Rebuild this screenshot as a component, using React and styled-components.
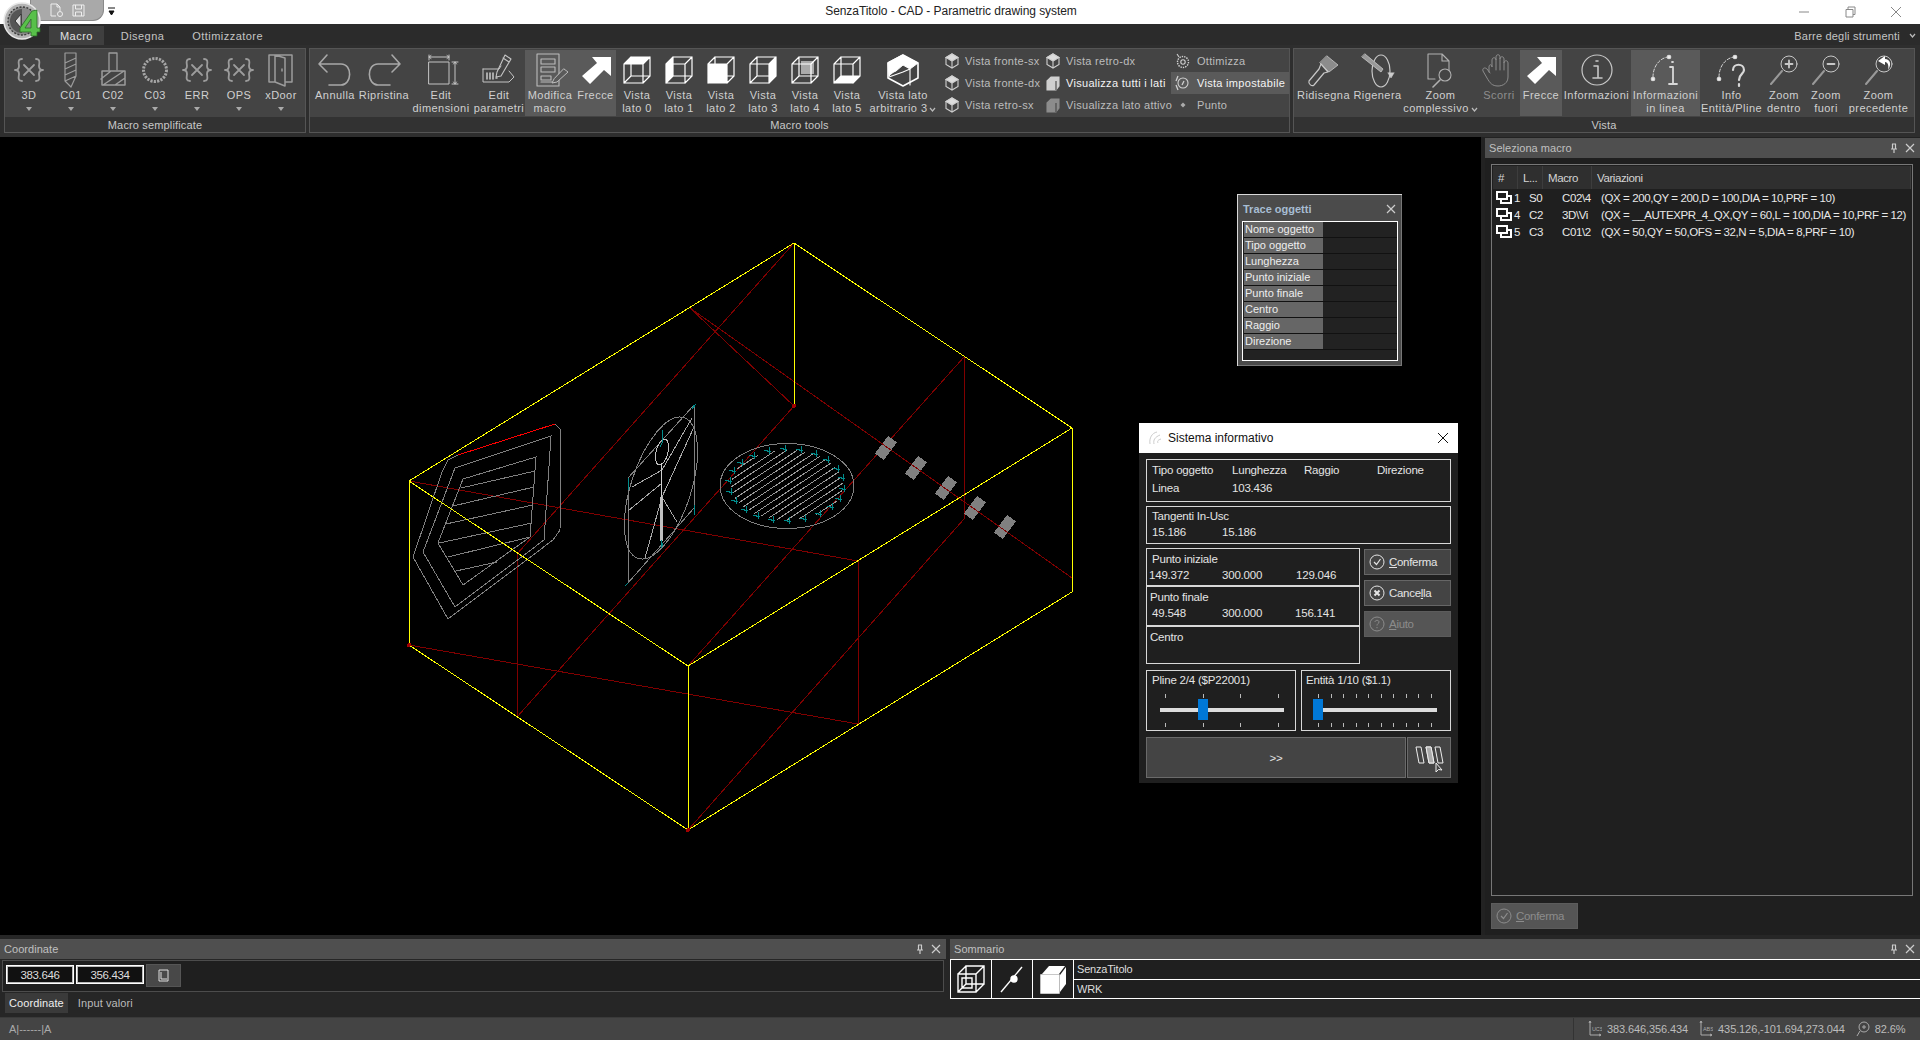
import React from 'react';
import styled, { createGlobalStyle } from 'styled-components';

const GlobalStyle = createGlobalStyle`
  html, body { margin: 0; padding: 0; background: #222; }
  body { font-family: "Liberation Sans", Arial, sans-serif; font-size: 11px; }
  * { box-sizing: border-box; }
`;

const Page = styled.div`
  width: 1920px;
  height: 1040px;
  display: flex;
  flex-direction: column;
  overflow: hidden;
  position: relative;
  background: #222;
`;

/* ---------- title bar ---------- */
const TitleBar = styled.div`
  height: 24px;
  background: #fff;
  display: flex;
  align-items: center;
  justify-content: center;
  position: relative;
  color: #222;
  font-size: 12px;
  letter-spacing: -0.06px;
  padding-right: 18px;
  padding-bottom: 2px;
`;
const LogoBox = styled.svg`
  position: absolute;
  left: 3px;
  top: 1px;
  width: 40px;
  height: 40px;
  z-index: 3;
`;
const QuickBar = styled.div`
  position: absolute;
  left: 30px;
  top: 0;
  width: 74px;
  height: 21px;
  background: #a9a9a9;
  border: 1px solid #8a8a8a;
  border-top: 0;
  border-radius: 0 0 11px 0;
  display: flex;
  align-items: center;
  gap: 7px;
  padding-left: 17px;
`;
const QuickMenu = styled.svg`
  position: absolute;
  left: 108px;
  top: 7px;
  width: 8px;
  height: 9px;
`;
const WinControls = styled.div`
  position: absolute;
  right: 1px;
  top: 0;
  display: flex;
`;
const WinBtn = styled.div`
  width: 46px;
  height: 24px;
  display: flex;
  align-items: center;
  justify-content: center;
  svg { width: 12px; height: 12px; stroke: #888; fill: none; stroke-width: 1; }
`;

/* ---------- ribbon ---------- */
const TabRow = styled.div`
  height: 21px;
  background: #2b2b2b;
  display: flex;
  align-items: flex-end;
  padding-left: 49px;
  position: relative;
  letter-spacing: 0.45px;
`;
const Tab = styled.div`
  height: 19px;
  padding: 0 11px;
  margin-right: ${(p) => p.$gap || 0}px;
  display: flex;
  align-items: center;
  color: ${(p) => (p.$active ? '#e0e0e0' : '#c4c4c4')};
  background: ${(p) => (p.$active ? '#3f3f3f' : 'transparent')};
`;
const ToolbarsMenu = styled.div`
  margin-left: auto;
  display: flex;
  align-items: center;
  gap: 7px;
  height: 19px;
  padding-right: 4px;
  color: #c4c4c4;
  letter-spacing: 0.2px;
`;
const Ribbon = styled.div`
  height: 92px;
  background: #2e2e2e;
  display: flex;
  gap: 3px;
  padding: 3px 5px 4px 4px;
`;
const Group = styled.div`
  width: ${(p) => p.$w}px;
  border: 1px solid #555;
  display: flex;
  flex-direction: column;
`;
const GroupBody = styled.div`
  height: 68px;
  background: #444;
  display: flex;
  padding: 1px 0 0 ${(p) => p.$pad || 0}px;
`;
const GroupLabel = styled.div`
  flex: 1;
  background: #323232;
  color: #c8c8c8;
  display: flex;
  align-items: center;
  justify-content: center;
  letter-spacing: 0.15px;
`;
const ToolBtn = styled.div`
  width: ${(p) => p.$w}px;
  height: 66px;
  display: flex;
  flex-direction: column;
  align-items: center;
  background: ${(p) => (p.$on ? '#5a5a5a' : 'transparent')};
  color: ${(p) => (p.$dim ? '#8e8e8e' : '#d0d0d0')};
  padding-top: 2px;
  letter-spacing: 0.45px;
`;
const ToolIcon = styled.svg`
  width: 36px;
  height: 36px;
  flex: none;
  margin-bottom: 1px;
  fill: none;
  stroke: ${(p) => p.$stroke || 'currentColor'};
  stroke-width: 1.5;
  stroke-linecap: round;
  stroke-linejoin: round;
`;
const ToolText = styled.div`
  line-height: 13px;
  text-align: center;
  white-space: nowrap;
`;
const DropDot = styled.div`
  width: 0;
  height: 0;
  margin-top: 5px;
  border-left: 3px solid transparent;
  border-right: 3px solid transparent;
  border-top: 4px solid #aaa;
`;
const SmallCol = styled.div`
  width: ${(p) => p.$w}px;
  display: flex;
  flex-direction: column;
  padding-left: ${(p) => p.$pad || 0}px;
`;
const SmallRow = styled.div`
  height: 22px;
  display: flex;
  align-items: center;
  gap: ${(p) => p.$gap || 5}px;
  white-space: nowrap;
  letter-spacing: 0.3px;
  padding-left: ${(p) => p.$indent || 0}px;
  color: ${(p) => (p.$bright ? '#f4f4f4' : '#bcbcbc')};
  background: ${(p) => (p.$on ? '#5a5a5a' : 'transparent')};
`;
const SmallIcon = styled.svg`
  width: 16px;
  height: 16px;
  flex: none;
  fill: none;
  stroke: #d0d0d0;
  stroke-width: 1.1;
`;
const Chevron = styled.svg`
  width: 7px;
  height: 5px;
  fill: none;
  stroke: #bbb;
  stroke-width: 1.2;
  margin-left: 2px;
  vertical-align: middle;
`;

/* ---------- centre ---------- */
const Main = styled.div`
  height: 798px;
  display: flex;
  gap: 4px;
`;
const Canvas = styled.div`
  width: 1481px;
  position: relative;
  background: #000;
`;
const Drawing = styled.svg`
  display: block;
  width: 1481px;
  height: 798px;
  shape-rendering: crispEdges;
  fill: none;
`;

/* floating windows */
const TraceWindow = styled.div`
  position: absolute;
  left: 1236px;
  top: 56px;
  width: 167px;
  height: 174px;
  background: #4b4b4b;
  border: 1px solid #000;
  box-shadow: inset 1px 1px 0 #d8d8d8, inset -1px -1px 0 #777;
  padding: 3px 4px 5px 5px;
  display: flex;
  flex-direction: column;
`;
const TraceTitle = styled.div`
  height: 24px;
  padding-left: 1px;
  display: flex;
  align-items: center;
  justify-content: space-between;
  color: #a7bdd3;
  font-weight: bold;
  font-size: 11px;
  padding-right: 2px;
`;
const TraceBox = styled.div`
  flex: 1;
  border: 1px solid #fff;
  background: #222;
  padding: 0 0 0 1px;
`;
const TraceRow = styled.div`
  height: 16px;
  display: grid;
  grid-template-columns: 79px 1fr;
  border-bottom: 1px solid #111;
`;
const TraceKey = styled.div`
  background: #666;
  color: #eee;
  font-size: 11px;
  line-height: 14px;
  padding-left: 1px;
`;
const InfoWindow = styled.div`
  position: absolute;
  left: 1139px;
  top: 286px;
  width: 319px;
  height: 360px;
  background: #1f1f1f;
  display: flex;
  flex-direction: column;
  font-size: 11.5px;
  color: #e4e4e4;
`;
const InfoTitle = styled.div`
  height: 30px;
  background: #fff;
  color: #111;
  display: flex;
  align-items: center;
  padding: 0 9px 0 9px;
  gap: 6px;
  font-size: 12px;
`;
const InfoClose = styled.svg`
  width: 12px;
  height: 12px;
  margin-left: auto;
  fill: none;
  stroke: #111;
`;
const InfoBody = styled.div`
  flex: 1;
  padding: 6px 7px 5px 7px;
  display: flex;
  flex-direction: column;
  letter-spacing: -0.2px;
`;
const Frame = styled.div`
  border: 1px solid #d8d8d8;
  padding: 1px 0 0 5px;
  height: ${(p) => p.$h}px;
  margin-bottom: ${(p) => p.$mb || 0}px;
`;
const ValueGrid = styled.div`
  display: grid;
  grid-template-columns: ${(p) => p.$cols};
  line-height: ${(p) => p.$lh || 16}px;
  padding-left: ${(p) => p.$in || 0}px;
  white-space: nowrap;
`;
const MidRow = styled.div`
  display: flex;
  gap: 4px;
  margin-bottom: 6px;
`;
const PointStack = styled.div`
  width: 214px;
  display: flex;
  flex-direction: column;
  border: 1px solid #d8d8d8;
`;
const PointBox = styled.div`
  height: ${(p) => p.$h}px;
  padding: 3px 0 0 2px;
  line-height: 15px;
  border-bottom: ${(p) => (p.$last ? '0' : '2px solid #d8d8d8')};
`;
const PointName = styled.div`
  padding-left: ${(p) => p.$in || 0}px;
`;
const SideButtons = styled.div`
  width: 87px;
  padding-top: 1px;
  display: flex;
  flex-direction: column;
  gap: 5px;
`;
const DlgButton = styled.div`
  height: 26px;
  background: ${(p) => (p.$off ? '#555' : '#444')};
  border: 1px solid ${(p) => (p.$off ? '#5c5c5c' : '#666')};
  color: ${(p) => (p.$off ? '#8c8c8c' : '#e4e4e4')};
  width: 87px;
  display: flex;
  align-items: center;
  gap: 4px;
  padding-left: 4px;
  letter-spacing: -0.3px;
  font-size: 11.5px;
  u { text-underline-offset: 1px; }
`;
const CircleIcon = styled.svg`
  width: 16px;
  height: 16px;
  flex: none;
  fill: none;
  stroke: currentColor;
`;
const SliderRow = styled.div`
  display: flex;
  gap: 5px;
  margin-bottom: 6px;
`;
const SliderFrame = styled.div`
  width: 150px;
  height: 61px;
  border: 1px solid #d8d8d8;
  padding: 2px 0 0 ${(p) => p.$pad}px;
  line-height: 15px;
`;
const SliderTrack = styled.div`
  position: relative;
  width: 124px;
  margin: 6px 0 0 ${(p) => p.$ml}px;
  height: 33px;
  display: flex;
  flex-direction: column;
  justify-content: space-between;
`;
const Ticks = styled.div`
  display: flex;
  justify-content: space-between;
  padding: 0 5px;
  i { display: block; width: 1px; height: 4px; background: #bbb; }
`;
const Rail = styled.div`
  position: absolute;
  left: 0;
  right: 0;
  top: 14px;
  height: 4px;
  background: #dcdcdc;
`;
const Thumb = styled.div`
  position: absolute;
  top: 5px;
  width: 10px;
  height: 21px;
  background: #0078d7;
`;
const BottomRow = styled.div`
  display: flex;
  gap: 1px;
`;
const NextButton = styled.div`
  width: 260px;
  height: 41px;
  background: #444;
  border: 1px solid #6a6a6a;
  display: flex;
  align-items: center;
  justify-content: center;
`;
const IconButton = styled.div`
  width: 44px;
  height: 41px;
  background: #444;
  border: 1px solid #6a6a6a;
  display: flex;
  align-items: center;
  justify-content: center;
  svg { width: 32px; height: 32px; }
`;

/* right dock */
const RightDock = styled.div`
  flex: 1;
  background: #1f1f1f;
  margin-top: 1px;
  display: flex;
  flex-direction: column;
`;
const DockTitle = styled.div`
  height: 20px;
  flex: none;
  background: #4f4f4f;
  color: #c0c0c0;
  display: flex;
  align-items: center;
  padding: 0 5px 0 4px;
  justify-content: space-between;
  letter-spacing: 0.05px;
`;
const DockTools = styled.div`
  display: flex;
  gap: 6px;
  align-items: center;
  svg { width: 10px; height: 10px; stroke: #ccc; fill: none; stroke-width: 1.2; }
`;
const ListBox = styled.div`
  flex: 1;
  margin: 6px 7px 0 6px;
  border: 1px solid #777;
  padding: 1px;
  font-size: 11.5px;
  letter-spacing: -0.4px;
  color: #e8e8e8;
`;
const ListHead = styled.div`
  height: 23px;
  background: #2f2f2f;
  display: grid;
  grid-template-columns: 25px 25px 49px 1fr;
  color: #d4d4d4;
  div { display: flex; align-items: center; padding-left: 5px; border-right: 1px solid #3d3d3d; }
`;
const ListRow = styled.div`
  height: 17px;
  display: grid;
  grid-template-columns: 18px 15px 33px 39px 1fr;
  align-items: center;
  padding-left: 3px;
  white-space: nowrap;
`;
const RowIcon = styled.svg`
  width: 17px;
  height: 15px;
  fill: none;
  stroke: #fff;
  stroke-width: 2;
`;
const RightFooter = styled.div`
  height: 39px;
  flex: none;
  padding: 7px 6px;
`;

/* bottom docks */
const Docks = styled.div`
  height: 82px;
  padding-top: 4px;
  background: #262626;
  display: flex;
  gap: 4px;
`;
const LeftDock = styled.div`
  width: 946px;
  display: flex;
  flex-direction: column;
`;
const CoordBox = styled.div`
  height: 32px;
  margin: 1px 2px 0 2px;
  background: #1f1f1f;
  border: 1px solid #4c4c4c;
  display: flex;
  align-items: flex-start;
  gap: 2px;
  padding: 3px 0 0 3px;
`;
const CoordInput = styled.div`
  width: 68px;
  height: 19px;
  margin-top: 1px;
  background: #111;
  border: 1px solid #fff;
  outline: 1px solid #bbb;
  outline-offset: -2px;
  color: #ddd;
  font-size: 11.5px;
  letter-spacing: -0.4px;
  display: flex;
  align-items: center;
  justify-content: center;
`;
const CoordBtn = styled.div`
  width: 35px;
  height: 23px;
  background: #484848;
  border: 1px solid #555;
  display: flex;
  align-items: center;
  justify-content: center;
  svg { width: 14px; height: 14px; stroke: #ddd; fill: none; }
`;
const DockTabs = styled.div`
  display: flex;
  padding-left: 5px;
  margin-top: 1px;
`;
const DockTab = styled.div`
  height: 20px;
  padding: 0 4px;
  margin-right: 6px;
  display: flex;
  align-items: center;
  letter-spacing: 0.1px;
  color: ${(p) => (p.$on ? '#eee' : '#bbb')};
  background: ${(p) => (p.$on ? '#3a3a3a' : 'transparent')};
`;
const SummaryDock = styled.div`
  flex: 1;
  display: flex;
  flex-direction: column;
`;
const SummaryBox = styled.div`
  height: 40px;
  display: flex;
  border: 1px solid #fff;
  border-width: 1px 0;
  background: #1f1f1f;
`;
const SummaryCell = styled.div`
  width: 42px;
  border: 1px solid #fff;
  border-width: 0 1px;
  margin-right: -1px;
  display: flex;
  align-items: center;
  justify-content: center;
  svg { width: 32px; height: 32px; fill: none; stroke: #fff; stroke-width: 1.4; }
`;
const SummaryRows = styled.div`
  flex: 1;
  margin-left: 1px;
  display: flex;
  flex-direction: column;
`;
const SummaryRow = styled.div`
  height: 19px;
  flex: 1;
  color: #ddd;
  letter-spacing: -0.2px;
  display: flex;
  align-items: center;
  padding-left: 3px;
  border-top: ${(p) => (p.$line ? '1px solid #fff' : '0')};
`;

/* status bar */
const StatusBar = styled.div`
  height: 23px;
  background: #444;
  border-top: 1px solid #3a3a3a;
  display: flex;
  align-items: center;
  color: #aaa;
  padding-left: 9px;
`;
const StatusRight = styled.div`
  margin-left: auto;
  width: 347px;
  height: 100%;
  border-left: 1px solid #333;
  display: flex;
  align-items: center;
  padding-left: 14px;
  color: #bcbcbc;
  letter-spacing: -0.1px;
`;
const StatusItem = styled.div`
  display: flex;
  align-items: center;
  gap: 5px;
  margin-right: ${(p) => p.$gap || 0}px;
  svg { width: 14px; height: 18px; stroke: #aaa; fill: none; stroke-width: 1; }
  text { font-size: 5.5px; fill: #aaa; stroke: none; }
`;

/* ---------- icons ---------- */
const Curly = () => (
  <ToolIcon viewBox="0 0 36 36" $stroke="#9c9c9c">
    <path d="M11 7C6 7 8 12 8 14C8 17 6 18 4 18C6 18 8 19 8 22C8 24 6 29 11 29" strokeWidth="1.8" />
    <path d="M25 7C30 7 28 12 28 14C28 17 30 18 32 18C30 18 28 19 28 22C28 24 30 29 25 29" strokeWidth="1.8" />
    <path d="M13 13L23 23M23 13L13 23" strokeWidth="1.8" />
  </ToolIcon>
);
const DrillIcon = () => (
  <ToolIcon viewBox="0 0 36 36" $stroke="#9c9c9c">
    <path d="M12 1H23V6L12 11ZM12 11V17L23 12V6M23 12V18L12 23V17M12 23L23 18V24L12 29V23M12 29L18 35L23 24" strokeWidth="1.2" />
  </ToolIcon>
);
const MillIcon = () => (
  <ToolIcon viewBox="0 0 36 36" $stroke="#9c9c9c">
    <path d="M14 1H22V18M14 1V18" strokeWidth="1.3" />
    <path d="M7 19H30V33H7ZM8 33L29 19M6 27L16 19M20 33L30 26" strokeWidth="1.5" />
  </ToolIcon>
);
const GearRing = () => (
  <ToolIcon viewBox="0 0 36 36" $stroke="#a6a6a6">
    <circle cx="18" cy="18" r="11.5" strokeWidth="3" strokeDasharray="2.2 1.2" strokeLinecap="butt" />
  </ToolIcon>
);
const DoorIcon = () => (
  <ToolIcon viewBox="0 0 36 36" $stroke="#9c9c9c">
    <path d="M12 3H6V30H12M12 3H29V30H22M12 3L22 6V34L12 30ZM19 17V19" strokeWidth="1.5" />
  </ToolIcon>
);
const UndoIcon = ({ flip }) => (
  <ToolIcon viewBox="0 0 36 36" $stroke="#a8a8a8" transform={flip ? 'scale(-1 1)' : undefined}>
    <path d="M2 12L10 3M2 12L10 20M2 12H24C36 12 35 33 24 33H12" strokeWidth="1.6" />
  </ToolIcon>
);
const EditDimIcon = () => (
  <ToolIcon viewBox="0 0 36 36" $stroke="#c4c4c4">
    <path d="M6 10H26V32H6ZM6 3V8M26 3V8M6 5H26M8 3.5L6 5L8 6.5M24 3.5L26 5L24 6.5M29 10H35M29 32H35M32 10V32M30.5 12L32 10L33.5 12M30.5 30L32 32L33.5 30" strokeWidth="1" />
  </ToolIcon>
);
const EditParamIcon = () => (
  <ToolIcon viewBox="0 0 36 36" $stroke="#c4c4c4">
    <path d="M2 17H18L20 14M28 19L33 25L28 30H2V17" strokeWidth="1" />
    <path d="M24 3L30 7L20 24L15 25L16 20ZM22 6L28 10" strokeWidth="1.1" />
    <path d="M6 21V27M9 21V27M12 21V27M15 26H16" strokeWidth="1.6" />
  </ToolIcon>
);
const MacroEditIcon = () => (
  <ToolIcon viewBox="0 0 36 36" $stroke="#bcbcbc">
    <path d="M5 2H27V34H5ZM9 7H23V12H9ZM9 15H23V20H9ZM9 24H19V28H9ZM9 30H22" strokeWidth="1.1" />
    <path d="M32 17L36 20L25 30L20 31L22 27Z" fill="#5a5a5a" strokeWidth="1" />
  </ToolIcon>
);
const ArrowIcon = () => (
  <ToolIcon viewBox="0 0 36 36" $stroke="none">
    <path d="M14 5H33V24L26 18L12 32L4 24L19 11Z" fill="#fff" />
  </ToolIcon>
);
const faces = {
  top: '5,12 12,5 31,5 24,12',
  left: '5,12 12,5 12,24 5,31',
  front: '5,12 24,12 24,31 5,31',
  right: '24,12 31,5 31,24 24,31',
  back: '14,9 27,9 27,22 14,22',
  bottom: '5,31 12,24 31,24 24,31',
};
const CubeIcon = ({ face }) => (
  <ToolIcon viewBox="0 0 36 36" $stroke="#fff">
    <polygon points={faces[face]} fill={face === 'back' ? '#aaa' : '#fff'} stroke="none" />
    <path d="M5 12H24V31H5ZM12 5H31V24H12ZM5 12L12 5M24 12L31 5M24 31L31 24M5 31L12 24" strokeWidth="1.2" />
  </ToolIcon>
);
const IsoIcon = () => (
  <ToolIcon viewBox="0 0 36 36" $stroke="#fff">
    <path d="M18 3L33 11V26L18 34L3 26V11Z" strokeWidth="1.6" />
    <path d="M18 3L33 11L25 17L18 13L11 19C8 20 6 22 4 24L3 11Z" fill="#fff" strokeWidth="1" />
    <path d="M18 20L25 17V33M18 20L4 25" strokeWidth="1.1" />
  </ToolIcon>
);
const SmallCube = () => (
  <SmallIcon viewBox="0 0 16 16">
    <path d="M8 1L14 4.5V11.5L8 15L2 11.5V4.5Z" />
    <path d="M2 4.5L8 8L14 4.5L8 1ZM8 8V15" fill="#ddd" />
  </SmallIcon>
);
const BoxCube = ({ tone }) => (
  <SmallIcon viewBox="0 0 16 16">
    <path d="M2 6H11V15H2ZM2 6L6 2H14V11L11 15M11 6L14 2" fill={tone} stroke={tone} />
    <path d="M11 6V15" stroke="#444" />
  </SmallIcon>
);
const OptimizeIcon = () => (
  <SmallIcon viewBox="0 0 16 16">
    <circle cx="8" cy="9" r="5.5" strokeDasharray="1.4 1" strokeWidth="1.4" />
    <circle cx="8" cy="9" r="2.2" />
    <path d="M2 1L4 4" />
  </SmallIcon>
);
const SettableIcon = () => (
  <SmallIcon viewBox="0 0 16 16">
    <circle cx="8" cy="8" r="5" />
    <path d="M3 1L1 6M3 15L1 10M9 6L7 10" strokeWidth="1.3" />
  </SmallIcon>
);
const PointIcon = () => (
  <SmallIcon viewBox="0 0 16 16">
    <path d="M8 5.5L10.5 8L8 10.5L5.5 8Z" fill="#aaa" stroke="none" />
  </SmallIcon>
);
const BrushIcon = () => (
  <ToolIcon viewBox="0 0 36 36" $stroke="#c8c8c8">
    <path d="M21 4L32 13L23 20L14 11Z" fill="#8c8c8c" strokeWidth="0.8" />
    <path d="M15 12L22 20L18 21L8 33C6 35 2 32 3 29L13 17Z" strokeWidth="1.2" />
  </ToolIcon>
);
const RegenIcon = () => (
  <ToolIcon viewBox="0 0 36 36" $stroke="#c8c8c8">
    <ellipse cx="21" cy="19" rx="9" ry="16" strokeWidth="1.2" />
    <path d="M2 5L21 20L23 17L5 2Z" fill="#999" strokeWidth="0.8" />
    <path d="M28 21L31 26L34 21Z" fill="#ccc" strokeWidth="0.6" />
  </ToolIcon>
);
const DocZoomIcon = () => (
  <ToolIcon viewBox="0 0 36 36" $stroke="#b0b0b0">
    <path d="M12 27H5V2H19L26 9V18M19 2V9H26" strokeWidth="1.1" />
    <circle cx="22" cy="23" r="6" strokeWidth="1.1" />
    <path d="M17 28L10 35" strokeWidth="1.6" />
  </ToolIcon>
);
const HandIcon = () => (
  <ToolIcon viewBox="0 0 36 36" $stroke="#8c8c8c">
    <path d="M8 20V15C8 12 11 12 11 15V8C11 5 15 5 15 8V5C15 2 19 2 19 5V7C19 4 23 4 23 7V11C23 8 27 8 27 11V25C27 31 22 34 17 34C11 34 9 31 6 26L2 19C1 16 4 15 6 17L9 21M15 8V18M19 7V18M23 11V18" strokeWidth="1" />
  </ToolIcon>
);
const InfoIcon = () => (
  <ToolIcon viewBox="0 0 36 36" $stroke="#c8c8c8">
    <circle cx="18" cy="18" r="15" strokeWidth="1.2" />
    <path d="M15 14H19V26M14 26H23M17 9H19" strokeWidth="1.6" />
  </ToolIcon>
);
const LineInfoIcon = () => (
  <ToolIcon viewBox="0 0 36 36" $stroke="#d8d8d8">
    <path d="M5 25C5 14 12 6 20 5" strokeWidth="1" strokeDasharray="3 2" />
    <circle cx="5" cy="27" r="1.6" fill="#fff" />
    <circle cx="21" cy="5" r="1.6" fill="#fff" />
    <path d="M22 15H25V32M21 32H29M24 10H25" strokeWidth="1.8" />
  </ToolIcon>
);
const EntityIcon = () => (
  <ToolIcon viewBox="0 0 36 36" $stroke="#d8d8d8">
    <path d="M5 25C5 14 12 6 20 5" strokeWidth="1" strokeDasharray="3 2" />
    <circle cx="5" cy="27" r="1.6" fill="#fff" />
    <circle cx="21" cy="5" r="1.6" fill="#fff" />
    <path d="M19 18C19 11 30 11 30 18C30 22 25 22 25 28M25 32V34" strokeWidth="2.2" />
  </ToolIcon>
);
const ZoomIcon = ({ mark }) => (
  <ToolIcon viewBox="0 0 36 36" $stroke="#c8c8c8">
    <circle cx="23" cy="12" r="8" strokeWidth="1" />
    <path d="M16 19L5 32" strokeWidth="2" stroke="#999" />
    {mark === 'plus' && <path d="M19.5 12H26.5M23 8.5V15.5" strokeWidth="1.8" />}
    {mark === 'minus' && <path d="M19.5 12H26.5" strokeWidth="1.8" />}
    {mark === 'back' && <path d="M24 4L17 9L24 13V10C27 10 28 14 27 18C31 12 29 7 24 7Z" fill="#fff" stroke="none" />}
  </ToolIcon>
);
const Down = () => (
  <Chevron viewBox="0 0 7 5"><path d="M1 1L3.5 4L6 1" /></Chevron>
);
const CheckCircle = () => (
  <CircleIcon viewBox="0 0 16 16">
    <circle cx="8" cy="8" r="7" />
    <path d="M5 8L7.5 10.5L11.5 5" strokeWidth="1.2" />
  </CircleIcon>
);
const CancelCircle = () => (
  <CircleIcon viewBox="0 0 16 16">
    <circle cx="8" cy="8" r="7" />
    <path d="M5.5 5.5L10.5 10.5M10.5 5.5L5.5 10.5" strokeWidth="2" />
  </CircleIcon>
);
const HelpCircle = () => (
  <CircleIcon viewBox="0 0 16 16">
    <circle cx="8" cy="8" r="7" />
    <path d="M6 6C6 3.8 10 3.8 10 6C10 7.5 8 7.5 8 9.5M8 11V12.2" />
  </CircleIcon>
);
const PinX = () => (
  <DockTools>
    <svg viewBox="0 0 10 10"><path d="M3 1H7M3.5 1V6H6.5V1M2 6H8M5 6V10" /></svg>
    <svg viewBox="0 0 10 10"><path d="M1 1L9 9M9 1L1 9" /></svg>
  </DockTools>
);

/* ---------- cad drawing data ---------- */
const CAD_YELLOW = [
  'M794 243L1072 428L688 666L409 481Z',
  'M794 243V406',
  'M409 481V645L688 830L1072 592V428',
  'M688 666V830',
];
const CAD_RED = [
  'M690 308L794 406',
  'M794 243L517 554V717',
  'M794 406L517 717',
  'M964 357L688 666',
  'M964 357V519L688 830',
  'M409 481L858 561V724L409 645',
];
const CAD_GRAY = [
  'M458 455L448 460L442 472L413 557L448 619L553 540L560 530L561 430L555 424',
  'M455 468L551 436L544 540L455 607L423 552Z',
  'M463 479L536 457L530 537L463 585L438 543Z',
  'M461 488L535 471M453 506L534 487M446 524L533 505M439 543L532 523M448 557L530 537M456 571L497 562',
  'M694 405L628 478V583L694 508V405',
];
const CAD_LIGHT = [
  'M692 418L662 470L632 487',
  'M694 427L662 497L645 558',
  'M662 497L677 522',
  'M628 511L662 483',
];
const CAD_TEAL = [
  'M694 405L692 409L696 404M662 430V443L660 447',
  'M628 478V490',
  'M694 505V515',
  'M628 583L625 586',
  'M661 540V548L663 543',
];
const RECTS = [
  [886, 448],
  [916, 468],
  [946, 488],
  [975, 508],
  [1005, 527],
];

const hatchLines = () => {
  const cx = 787;
  const cy = 485;
  const rx = 56;
  const ry = 35;
  const m = -0.66;
  const out = [];
  for (let c = -56; c <= 56; c += 7) {
    const a = 1 / (rx * rx) + (m * m) / (ry * ry);
    const b = (2 * m * c) / (ry * ry);
    const d = b * b - 4 * a * ((c * c) / (ry * ry) - 1);
    if (d > 0) {
      const x1 = (-b - Math.sqrt(d)) / (2 * a);
      const x2 = (-b + Math.sqrt(d)) / (2 * a);
      out.push(`M${cx + x1} ${cy + m * x1 + c}L${cx + x2} ${cy + m * x2 + c}`);
    }
  }
  return out.join('');
};
const tealTicks = () => {
  let d = '';
  for (let i = 0; i < 22; i += 1) {
    const t = (i / 22) * Math.PI * 2 + 0.1;
    const x = Math.round(787 + 57 * Math.cos(t));
    const y = Math.round(485 + 36 * Math.sin(t));
    d += `M${x - 5} ${y - 1}L${x + 2} ${y + 1}M${x + 1} ${y - 4}L${x} ${y + 3}`;
  }
  return d;
};

const CadDrawing = () => (
  <Drawing viewBox="0 137 1481 798">
    {CAD_RED.map((d) => <path key={d} d={d} stroke="#800000" />)}
    <path d="M458 455L555 424" stroke="#ff0000" />
    {CAD_GRAY.map((d) => <path key={d} d={d} stroke="#808080" />)}
    {CAD_LIGHT.map((d) => <path key={d} d={d} stroke="#a8a8a8" />)}
    <ellipse cx="661" cy="488" rx="30" ry="74" transform="rotate(18 661 488)" stroke="#808080" />
    <ellipse cx="662" cy="452" rx="6" ry="13" transform="rotate(14 662 452)" stroke="#c0c0c0" />
    <path d="M661 463V497" stroke="#d0d0d0" />
    <path d="M661 497V541" stroke="#c0c0c0" strokeWidth="3" />
    {CAD_TEAL.map((d) => <path key={d} d={d} stroke="#008c8c" />)}
    <ellipse cx="787" cy="486" rx="67" ry="42.5" stroke="#808080" />
    <path d={hatchLines()} stroke="#9a9a9a" />
    <path d={tealTicks()} stroke="#008c8c" />
    {RECTS.map(([x, y]) => (
      <rect key={x} x={x - 5.5} y={y - 11} width="11" height="22" fill="#808080" transform={`rotate(37 ${x} ${y})`} />
    ))}
    <path d="M690 308L1072 578" stroke="#800000" />
    {CAD_YELLOW.map((d) => <path key={d} d={d} stroke="#ffff00" />)}
    <circle cx="794" cy="406" r="2" fill="#a00000" />
    <circle cx="409" cy="645" r="2" fill="#a00000" />
    <circle cx="688" cy="830" r="2" fill="#a00000" />
  </Drawing>
);

/* ---------- pieces with data ---------- */
const MACRO_BTNS = [
  ['3D', <Curly />],
  ['C01', <DrillIcon />],
  ['C02', <MillIcon />],
  ['C03', <GearRing />],
  ['ERR', <Curly />],
  ['OPS', <Curly />],
  ['xDoor', <DoorIcon />],
];
const TOOL_BTNS = [
  { w: 48, label: ['Annulla'], icon: <UndoIcon /> },
  { w: 50, label: ['Ripristina'], icon: <UndoIcon flip /> },
  { w: 64, label: ['Edit', 'dimensioni'], icon: <EditDimIcon /> },
  { w: 52, label: ['Edit', 'parametri'], icon: <EditParamIcon /> },
  { w: 50, label: ['Modifica', 'macro'], icon: <MacroEditIcon />, on: true },
  { w: 41, label: ['Frecce'], icon: <ArrowIcon />, on: true },
  { w: 42, label: ['Vista', 'lato 0'], icon: <CubeIcon face="top" /> },
  { w: 42, label: ['Vista', 'lato 1'], icon: <CubeIcon face="left" /> },
  { w: 42, label: ['Vista', 'lato 2'], icon: <CubeIcon face="front" /> },
  { w: 42, label: ['Vista', 'lato 3'], icon: <CubeIcon face="right" /> },
  { w: 42, label: ['Vista', 'lato 4'], icon: <CubeIcon face="back" /> },
  { w: 42, label: ['Vista', 'lato 5'], icon: <CubeIcon face="bottom" /> },
  { w: 70, label: ['Vista lato', 'arbitrario 3'], icon: <IsoIcon />, menu: true },
];
const VIEW_BTNS = [
  { w: 57, label: ['Ridisegna'], icon: <BrushIcon /> },
  { w: 51, label: ['Rigenera'], icon: <RegenIcon /> },
  { w: 75, label: ['Zoom', 'complessivo'], icon: <DocZoomIcon />, menu: true },
  { w: 42, label: ['Scorri'], icon: <HandIcon />, dim: true },
  { w: 42, label: ['Frecce'], icon: <ArrowIcon />, on: true },
  { w: 69, label: ['Informazioni'], icon: <InfoIcon /> },
  { w: 69, label: ['Informazioni', 'in linea'], icon: <LineInfoIcon />, on: true },
  { w: 63, label: ['Info', 'Entità/Pline'], icon: <EntityIcon /> },
  { w: 42, label: ['Zoom', 'dentro'], icon: <ZoomIcon mark="plus" /> },
  { w: 42, label: ['Zoom', 'fuori'], icon: <ZoomIcon mark="minus" /> },
  { w: 63, label: ['Zoom', 'precedente'], icon: <ZoomIcon mark="back" /> },
];
const TRACE_ROWS = ['Nome oggetto', 'Tipo oggetto', 'Lunghezza', 'Punto iniziale', 'Punto finale', 'Centro', 'Raggio', 'Direzione'];
const MACRO_ROWS = [
  ['1', 'S0', 'C02\\4', '(QX = 200,QY = 200,D = 100,DIA = 10,PRF = 10)'],
  ['4', 'C2', '3D\\Vi', '(QX = __AUTEXPR_4_QX,QY = 60,L = 100,DIA = 10,PRF = 12)'],
  ['5', 'C3', 'C01\\2', '(QX = 50,QY = 50,OFS = 32,N = 5,DIA = 8,PRF = 10)'],
];

const RibbonButton = ({ w, label, icon, on, dim, menu }) => (
  <ToolBtn $w={w} $on={on} $dim={dim}>
    {icon}
    {label.map((line, i) => (
      <ToolText key={line}>
        {line}
        {menu && i === label.length - 1 && <Down />}
      </ToolText>
    ))}
  </ToolBtn>
);

const Slider = ({ label, pad, ml, ticks, at }) => {
  const marks = Array.from({ length: ticks }, (_, i) => <i key={i} />);
  return (
    <SliderFrame $pad={pad}>
      {label}
      <SliderTrack $ml={ml}>
        <Ticks>{marks}</Ticks>
        <Rail />
        <Thumb style={{ left: at }} />
        <Ticks>{marks}</Ticks>
      </SliderTrack>
    </SliderFrame>
  );
};

export default function App() {
  return (
    <Page>
      <GlobalStyle />
      <TitleBar>
        <QuickBar>
          <svg width="16" height="16" viewBox="0 0 16 16" fill="none" stroke="#eee">
            <path d="M3 2H9L12 5V9M3 2V14H8M9 2V5H12" />
            <circle cx="12" cy="12" r="2.5" />
          </svg>
          <svg width="15" height="15" viewBox="0 0 15 15" fill="none" stroke="#eee">
            <path d="M2 2H13V13H2ZM4.5 2V6H10.5V2M4.5 13V9H10.5V13" />
          </svg>
        </QuickBar>
        <LogoBox viewBox="0 0 40 40">
          <circle cx="19" cy="20" r="18" fill="#b4b4b4" stroke="#e8e8e8" strokeWidth="1.5" />
          <circle cx="19" cy="20" r="14" fill="#8a8a8a" stroke="#3c3c3c" strokeWidth="1.4" strokeDasharray="2 1.5" />
          <path d="M19 8A12 12 0 0 0 19 32" fill="#555" />
          <path d="M12 20L18 13V27Z" fill="#ddd" stroke="#333" />
          <path
            d="M29 10L34 9V27H37V31H34V35H28V31H17V27ZM28 18L22 27H28Z"
            fillRule="evenodd"
            fill="#58c04a"
            stroke="#2c6a26"
            strokeWidth="0.8"
          />
        </LogoBox>
        <QuickMenu viewBox="0 0 8 9">
          <path d="M0 1H7M1 4H6L3.5 8Z" stroke="#111" fill="#111" />
        </QuickMenu>
        SenzaTitolo - CAD - Parametric drawing system
        <WinControls>
          <WinBtn><svg viewBox="0 0 12 12"><path d="M1 6H11" /></svg></WinBtn>
          <WinBtn><svg viewBox="0 0 12 12"><path d="M2 3.5H9V11H2ZM4 3.5V1H11V8.5H9" /></svg></WinBtn>
          <WinBtn><svg viewBox="0 0 12 12"><path d="M1 1L11 11M11 1L1 11" /></svg></WinBtn>
        </WinControls>
      </TitleBar>

      <TabRow>
        <Tab $active $gap={6}>Macro</Tab>
        <Tab $gap={6}>Disegna</Tab>
        <Tab>Ottimizzatore</Tab>
        <ToolbarsMenu>
          Barre degli strumenti
          <Down />
        </ToolbarsMenu>
      </TabRow>

      <Ribbon>
        <Group $w={302}>
          <GroupBody $pad={3}>
            {MACRO_BTNS.map(([name, icon]) => (
              <ToolBtn key={name} $w={42}>
                {icon}
                <ToolText>{name}</ToolText>
                <DropDot />
              </ToolBtn>
            ))}
          </GroupBody>
          <GroupLabel>Macro semplificate</GroupLabel>
        </Group>
        <Group $w={981}>
          <GroupBody $pad={1}>
            {TOOL_BTNS.map((b) => <RibbonButton key={b.label.join()} {...b} />)}
            <SmallCol $w={103} $pad={6}>
              <SmallRow><SmallCube />Vista fronte-sx</SmallRow>
              <SmallRow><SmallCube />Vista fronte-dx</SmallRow>
              <SmallRow><SmallCube />Vista retro-sx</SmallRow>
            </SmallCol>
            <SmallCol $w={130} $pad={4}>
              <SmallRow><SmallCube />Vista retro-dx</SmallRow>
              <SmallRow $bright><BoxCube tone="#cfcfcf" />Visualizza tutti i lati</SmallRow>
              <SmallRow><BoxCube tone="#8c8c8c" />Visualizza lato attivo</SmallRow>
            </SmallCol>
            <SmallCol $w={118}>
              <SmallRow $indent={4} $gap={6}><OptimizeIcon />Ottimizza</SmallRow>
              <SmallRow $on $bright $indent={4} $gap={6}><SettableIcon />Vista impostabile</SmallRow>
              <SmallRow $indent={4} $gap={6}><PointIcon />Punto</SmallRow>
            </SmallCol>
          </GroupBody>
          <GroupLabel>Macro tools</GroupLabel>
        </Group>
        <Group $w={622}>
          <GroupBody $pad={1}>
            {VIEW_BTNS.map((b) => <RibbonButton key={b.label.join()} {...b} />)}
          </GroupBody>
          <GroupLabel>Vista</GroupLabel>
        </Group>
      </Ribbon>

      <Main>
        <Canvas>
          <CadDrawing />
          <TraceWindow>
            <TraceTitle>
              Trace oggetti
              <DockTools><svg viewBox="0 0 10 10"><path d="M1 1L9 9M9 1L1 9" /></svg></DockTools>
            </TraceTitle>
            <TraceBox>
              {TRACE_ROWS.map((r) => (
                <TraceRow key={r}><TraceKey>{r}</TraceKey><span /></TraceRow>
              ))}
            </TraceBox>
          </TraceWindow>

          <InfoWindow>
            <InfoTitle>
              <svg width="14" height="14" viewBox="0 0 14 14" fill="none" stroke="#ccc">
                <path d="M2 13C1 7 4 2 9 1M6 13C5 9 7 6 12 4M10 12C9 10 10 9 13 8" />
              </svg>
              Sistema informativo
              <InfoClose viewBox="0 0 12 12"><path d="M1 1L11 11M11 1L1 11" /></InfoClose>
            </InfoTitle>
            <InfoBody>
              <Frame $h={43} $mb={4}>
                <ValueGrid $cols="80px 72px 73px 1fr" $lh={18}>
                  <span>Tipo oggetto</span><span>Lunghezza</span><span>Raggio</span><span>Direzione</span>
                  <span>Linea</span><span>103.436</span><span /><span />
                </ValueGrid>
              </Frame>
              <Frame $h={38} $mb={4}>
                <ValueGrid $cols="70px 1fr">
                  <span>Tangenti In-Usc</span><span />
                  <span>15.186</span><span>15.186</span>
                </ValueGrid>
              </Frame>
              <MidRow>
                <PointStack>
                  <PointBox $h={38}>
                    <PointName $in={3}>Punto iniziale</PointName>
                    <ValueGrid $cols="73px 74px 1fr"><span>149.372</span><span>300.000</span><span>129.046</span></ValueGrid>
                  </PointBox>
                  <PointBox $h={40}>
                    <PointName $in={1}>Punto finale</PointName>
                    <ValueGrid $cols="70px 73px 1fr" $in={3}><span>49.548</span><span>300.000</span><span>156.141</span></ValueGrid>
                  </PointBox>
                  <PointBox $h={36} $last>
                    <PointName $in={1}>Centro</PointName>
                  </PointBox>
                </PointStack>
                <SideButtons>
                  <DlgButton><CheckCircle /><span><u>C</u>onferma</span></DlgButton>
                  <DlgButton><CancelCircle /><span>Cance<u>l</u>la</span></DlgButton>
                  <DlgButton $off><HelpCircle /><span><u>A</u>iuto</span></DlgButton>
                </SideButtons>
              </MidRow>
              <SliderRow>
                <Slider label="Pline 2/4 ($P22001)" pad={5} ml={8} ticks={4} at={38} />
                <Slider label="Entità 1/10 ($1.1)" pad={4} ml={7} ticks={10} at={0} />
              </SliderRow>
              <BottomRow>
                <NextButton>&gt;&gt;</NextButton>
                <IconButton>
                  <svg viewBox="0 0 32 32" fill="none" stroke="#eee">
                    <path d="M3 5H8L11 21H6ZM13 5H18L21 21H16Z" />
                    <path d="M13 5H18L21 21H16Z" fill="#aaa" />
                    <path d="M22 5H27L30 21H25Z" />
                    <path d="M23 21L23 30L25.5 27.5L29 28Z" fill="#444" />
                  </svg>
                </IconButton>
              </BottomRow>
            </InfoBody>
          </InfoWindow>
        </Canvas>

        <RightDock>
          <DockTitle>Seleziona macro<PinX /></DockTitle>
          <ListBox>
            <ListHead>
              <div>#</div><div>L...</div><div>Macro</div><div>Variazioni</div>
            </ListHead>
            {MACRO_ROWS.map(([n, l, m, v]) => (
              <ListRow key={n}>
                <RowIcon viewBox="0 0 17 15">
                  <path d="M1 2H11V9H1Z" />
                  <path d="M5 9V13H15V6H11" />
                </RowIcon>
                <span>{n}</span>
                <span>{l}</span>
                <span>{m}</span>
                <span>{v}</span>
              </ListRow>
            ))}
          </ListBox>
          <RightFooter>
            <DlgButton $off><CheckCircle /><span><u>C</u>onferma</span></DlgButton>
          </RightFooter>
        </RightDock>
      </Main>

      <Docks>
        <LeftDock>
          <DockTitle>Coordinate<PinX /></DockTitle>
          <CoordBox>
            <CoordInput>383.646</CoordInput>
            <CoordInput>356.434</CoordInput>
            <CoordBtn>
              <svg viewBox="0 0 14 14"><path d="M2 1H11V12H2ZM4 3V10H10" /></svg>
            </CoordBtn>
          </CoordBox>
          <DockTabs>
            <DockTab $on>Coordinate</DockTab>
            <DockTab>Input valori</DockTab>
          </DockTabs>
        </LeftDock>
        <SummaryDock>
          <DockTitle>Sommario<PinX /></DockTitle>
          <SummaryBox>
            <SummaryCell>
              <svg viewBox="0 0 32 32">
                <path d="M3 11H21V29H3ZM11 3H29V21H11ZM3 11L11 3M21 11L29 3M21 29L29 21M3 29L11 21M7 15H17V25H7Z" />
              </svg>
            </SummaryCell>
            <SummaryCell>
              <svg viewBox="0 0 32 32">
                <path d="M5 29L26 4" />
                <circle cx="18" cy="16" r="3" fill="#fff" />
              </svg>
            </SummaryCell>
            <SummaryCell>
              <svg viewBox="0 0 32 32">
                <path d="M4 12H22V30H4Z" fill="#fff" />
                <path d="M5 11L12 3H28L22 11Z" fill="#fff" stroke="none" />
                <path d="M23 12L29 4V21L23 29Z" fill="#fff" stroke="none" />
              </svg>
            </SummaryCell>
            <SummaryRows>
              <SummaryRow>SenzaTitolo</SummaryRow>
              <SummaryRow $line>WRK</SummaryRow>
            </SummaryRows>
          </SummaryBox>
        </SummaryDock>
      </Docks>

      <StatusBar>
        A|------|A
        <StatusRight>
          <StatusItem $gap={11}>
            <svg viewBox="0 0 14 18">
              <path d="M2 1V15H13M2 1L1 3M2 1L3 3M13 15L11 14M13 15L11 16" />
              <text x="4" y="11">UCS</text>
            </svg>
            383.646,356.434
          </StatusItem>
          <StatusItem $gap={11}>
            <svg viewBox="0 0 14 18">
              <path d="M2 1V15H13M2 1L1 3M2 1L3 3M13 15L11 14M13 15L11 16" />
              <text x="4" y="11">ABS</text>
            </svg>
            435.126,-101.694,273.044
          </StatusItem>
          <StatusItem>
            <svg viewBox="0 0 14 18"><circle cx="8" cy="7" r="5" /><path d="M4 11L1 16M6 7H10M8 5V9" /></svg>
            82.6%
          </StatusItem>
        </StatusRight>
      </StatusBar>
    </Page>
  );
}
